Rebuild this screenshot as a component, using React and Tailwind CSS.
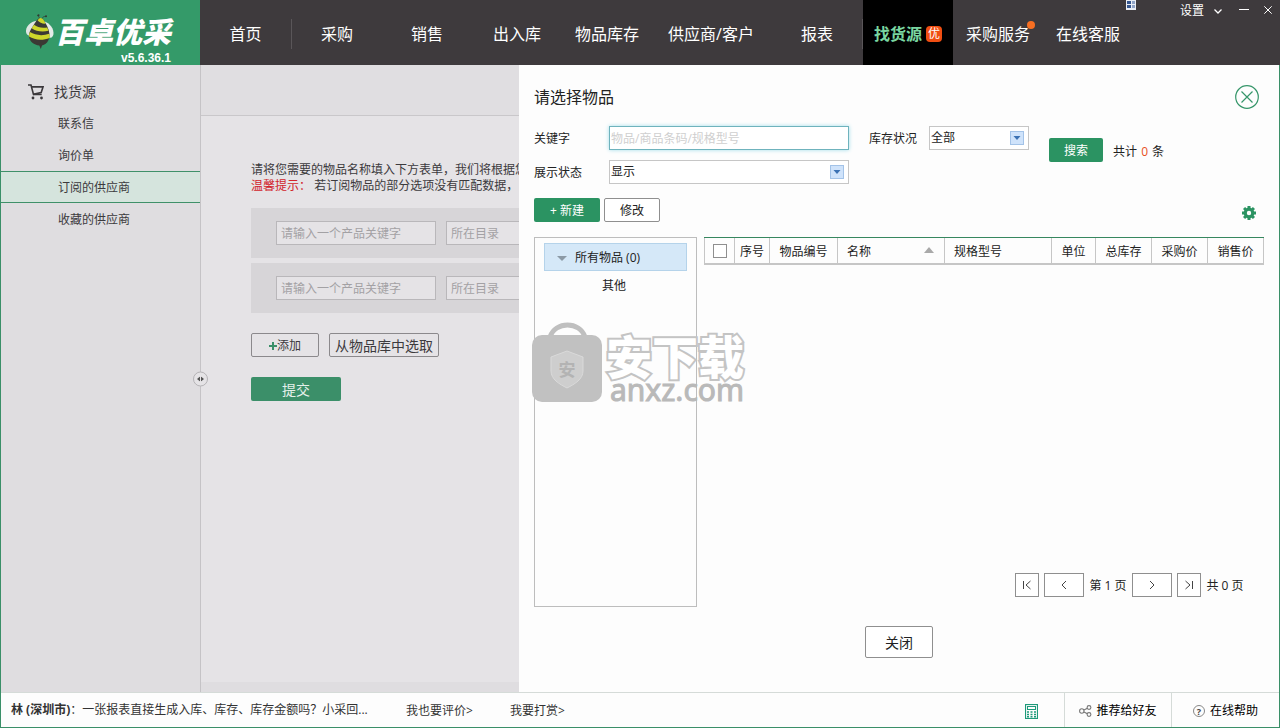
import React from "react";

const NAV = [
  { label: "采购" },
  { label: "销售" },
  { label: "出入库" },
  { label: "物品库存" },
  { label: "供应商/客户", wide: true },
  { label: "报表" },
];

const SIDE = [
  { label: "联系信" },
  { label: "询价单" },
  { label: "订阅的供应商", active: true },
  { label: "收藏的供应商" },
];

function BeeLogo() {
  return (
    <svg className="h-9 w-[30px] shrink-0" viewBox="0 0 30 36" aria-hidden="true">
      <path d="M14.500 4.500C14 2.500 13.500 1.800 12.200 1.500M17 4.500c1-1.800 2-2.200 3.500-2" stroke="#2f4a3a" strokeWidth="0.900" fill="none" />
      <circle cx="13.500" cy="1.300" r="1" fill="#2f3a33" />
      <circle cx="21" cy="2.300" r="1" fill="#2f3a33" />
      <path d="M14 6.500C8 6.500 1.500 10.500 1 16.500c-.3 3.500 2 5.500 4.500 5z" fill="#dfe6e2" />
      <path d="M18 7c5 1 10 5.500 10.500 11.500.3 4-2 6-4.500 5z" fill="#e6ebe8" />
      <path d="M15.500 4c2.500 0 5 4.500 7 9 2 4.500 2.800 9 1 13-1.500 3.300-3.800 4.800-6.500 5.400L15.800 35l-1.500-3.500C9 31 4.500 27.500 4 22.500c-.3-4.500 2.500-8 5-12C11 7.300 12.800 4 15.500 4z" fill="#3b3934" />
      <path d="M12.600 6.500C13.500 5 14.400 4 15.500 4c1.500 0 3 1.500 4.300 4l.8 1.600c-3 .3-6-.9-8-3.100z" fill="#ced62b" />
      <path d="M9 10.800l-2.300 3.500c4.300 3 10.500 4.300 16.800 2.500l-1.300-3.400C17.500 14.500 12.500 13.500 9 10.800z" fill="#ced62b" />
      <path d="M4.900 18.100c-.7 1.400-1 3-.9 4.500 5.500 3.500 13.500 4.300 20.600 1.400.1-1.400 0-2.800-.3-4.200C17.500 22 10.500 21.500 4.900 18.100z" fill="#ced62b" />
    </svg>
  );
}

function SelectBox({ id, value, className }) {
  return (
    <div className={"relative h-6 " + className}>
      <select
        id={id}
        defaultValue={value}
        className="block h-6 w-full appearance-none rounded-none border border-[#c6c6c6] bg-white pl-px text-xs text-[#222] outline-none"
      >
        <option>{value}</option>
      </select>
      <span className="pointer-events-none absolute top-[5px] right-[5px] flex size-3.5 items-center justify-center border border-[#a3c3e8] bg-[#cfe3fb]">
        <svg className="h-1 w-2" viewBox="0 0 8 4" aria-hidden="true">
          <path d="M0.500 0h7L4 4z" fill="#3c72b4" />
        </svg>
      </span>
    </div>
  );
}

function FormRow({ n }) {
  return (
    <div className="flex h-[50px] items-center gap-2.5 bg-[#d7d5d8] pl-[25px]">
      <input
        aria-label={"产品关键字 " + n}
        placeholder="请输入一个产品关键字"
        className="h-6 w-40 shrink-0 border border-[#b9b7ba] bg-[#e5e3e6] px-1 text-xs outline-none placeholder:text-[#a3a1a4]"
      />
      <input
        aria-label={"所在目录 " + n}
        placeholder="所在目录"
        className="h-6 w-40 shrink-0 border border-[#b9b7ba] bg-[#e5e3e6] px-1 text-xs outline-none placeholder:text-[#a3a1a4]"
      />
    </div>
  );
}

function Header() {
  return (
    <header className="relative flex h-[65px] shrink-0 bg-[#3e3a3d] text-white">
      <div className="flex w-[200px] shrink-0 flex-col bg-[#349a69]">
        <div className="flex items-center pt-3.5 pl-[25px]">
          <BeeLogo />
          <span className="text-[29px] leading-9 font-black italic">百卓优采</span>
        </div>
        <span className="pr-[29px] text-right font-['Liberation_Sans',sans-serif] text-xs leading-4 font-bold">
          v5.6.36.1
        </span>
      </div>
      <nav className="flex pt-0.5 text-base">
        <a href="#home" className="flex w-[91px] items-center justify-center">首页</a>
        <span className="h-[30px] w-px self-center bg-[#5a5659]" />
        {NAV.map((item) => (
          <a
            key={item.label}
            href="#nav"
            className={"flex items-center justify-center whitespace-nowrap " + (item.wide ? "w-[120px] pr-0.5" : "w-[90px]")}
          >
            {item.label}
          </a>
        ))}
        <span className="h-[30px] w-px self-center bg-[#5a5659]" />
        <a href="#source" className="-mt-0.5 flex w-[90px] items-center justify-center gap-1 bg-black pt-0.5 font-bold text-[#7ad6a0]">
          找货源
          <span className="flex size-4 items-center justify-center rounded-sm bg-[#f04e12] text-xs font-normal text-white">优</span>
        </a>
        <a href="#service" className="relative flex w-[90px] items-center justify-center">
          采购服务
          <span className="absolute top-[19px] right-2 size-2 rounded-full bg-[#f86f22]" />
        </a>
        <a href="#support" className="flex w-[90px] items-center justify-center">在线客服</a>
      </nav>
      <div className="absolute top-0 right-0 flex items-start text-xs">
        <svg className="mr-11 size-2.5" viewBox="0 0 10 10" aria-hidden="true">
          <rect width="10" height="10" fill="#e9eef5" />
          <path d="M1 1h4v3H1zM1 5h4v3H1z" fill="#34558f" />
          <path d="M6 1h3v3H6zM6 5h3v3H6z" fill="#8fa4c8" />
        </svg>
        <button type="button" className="flex h-[22px] items-center gap-2.5">
          设置
          <svg className="h-[5px] w-2" viewBox="0 0 8 5" fill="none" stroke="white" strokeWidth="1.3" aria-hidden="true">
            <path d="M0.500 0.500L4 4l3.500-3.500" />
          </svg>
        </button>
        <button type="button" aria-label="最小化" className="ml-[17px] flex h-5 items-center">
          <svg className="size-2.5" viewBox="0 0 10 10" stroke="white" aria-hidden="true">
            <path d="M0 4.500h10" />
          </svg>
        </button>
        <button type="button" aria-label="关闭窗口" className="mr-2 ml-[15px] flex h-5 items-center">
          <svg className="size-2" viewBox="0 0 8 8" stroke="white" aria-hidden="true">
            <path d="M0.300 0.300l7.400 7.400M7.700 0.300L0.300 7.700" />
          </svg>
        </button>
      </div>
    </header>
  );
}

function Sidebar() {
  return (
    <aside className="relative w-[200px] shrink-0 border-r border-[#c5c3c6] bg-[#dfdde0] pt-2.5 text-xs text-[#3c3a3d]">
      <div className="flex h-8 items-center gap-2.5 pt-0.5 pl-[27px] text-sm">
        <svg className="h-4 w-4" viewBox="0 0 16 16" fill="none" stroke="#3b383b" strokeWidth="1.600" aria-hidden="true">
          <path d="M0 1h3l2.500 9.500h8.200" />
          <path d="M3.500 2.900h11.500L13.200 8.600 5 10.400" />
          <circle cx="5" cy="14" r="1.400" fill="#3b383b" stroke="none" />
          <circle cx="13.500" cy="14" r="1.400" fill="#3b383b" stroke="none" />
        </svg>
        找货源
      </div>
      {SIDE.map((item) => (
        <a
          key={item.label}
          href="#side"
          className={
            "flex h-8 items-center pt-0.5 pl-[57px] " +
            (item.active ? "border-y border-[#3f9069] bg-[#d5e4dd]" : "")
          }
        >
          {item.label}
        </a>
      ))}
      <button
        type="button"
        aria-label="折叠侧栏"
        className="absolute top-1/2 -right-2 z-10 flex size-[15px] -translate-y-1/2 items-center justify-center rounded-full border border-[#b5b3b6] bg-[#e5e3e6]"
      >
        <svg className="h-[5px] w-[7px]" viewBox="0 0 7 5" fill="#555" aria-hidden="true">
          <path d="M3 0v5L0 2.500zM4 0v5l3-2.500z" />
        </svg>
      </button>
    </aside>
  );
}

function Content() {
  return (
    <section className="flex min-w-0 flex-1 flex-col overflow-hidden bg-[#e5e3e6] text-xs text-[#3c3a3d]">
      <div className="h-[51px] border-b border-[#c9c7ca] bg-[#e0dee1]" />
      <div className="flex-1 pt-[46px] pl-[50px]">
        <p className="leading-4 whitespace-nowrap">请将您需要的物品名称填入下方表单，我们将根据您</p>
        <p className="leading-4 whitespace-nowrap">
          <span className="text-[#d2242b]">温馨提示：</span> 若订阅物品的部分选项没有匹配数据，
        </p>
        <div className="mt-3.5 flex flex-col gap-[5px]">
          <FormRow n={1} />
          <FormRow n={2} />
        </div>
        <div className="mt-5 flex gap-2.5">
          <button type="button" className="flex h-6 w-[68px] items-center justify-center rounded-xs border border-[#8b898c] pt-px">
            <svg className="size-2" viewBox="0 0 8 8" stroke="#3a8f68" strokeWidth="2" aria-hidden="true">
              <path d="M4 0v8M0 4h8" />
            </svg>
            添加
          </button>
          <button type="button" className="h-6 w-[110px] rounded-xs border border-[#8b898c] pt-px text-sm leading-5 whitespace-nowrap">
            从物品库中选取
          </button>
        </div>
        <button type="button" className="mt-5 h-6 w-[90px] rounded-xs bg-[#3b8f69] pt-px text-sm leading-5 text-[#e5f0ea]">
          提交
        </button>
      </div>
      <div className="h-2.5 bg-[#dfdde0]" />
    </section>
  );
}

const TH = "border-r border-[#c6c6c6] p-0 text-center font-normal whitespace-nowrap";
const TH_TEXT = TH + " pt-0.5";

function ItemTable() {
  return (
    <div className="border-t border-[#36875f]">
      <table className="w-full table-fixed border-separate border-spacing-0 border-b-2 border-l border-[#c6c6c6]">
        <colgroup>
          <col className="w-[30px]" />
          <col className="w-[35px]" />
          <col className="w-[68px]" />
          <col />
          <col />
          <col className="w-11" />
          <col className="w-14" />
          <col className="w-14" />
          <col className="w-14" />
        </colgroup>
        <thead>
          <tr className="h-[25px]">
            <th className={TH}>
              <input
                type="checkbox"
                aria-label="全选"
                className="mx-auto block size-3.5 appearance-none border border-[#8f8f8f] bg-white"
              />
            </th>
            <th className={TH_TEXT}>序号</th>
            <th className={TH_TEXT}>物品编号</th>
            <th className={TH_TEXT}>
              <span className="flex items-center justify-between pr-2.5 pl-[9px]">
                名称
                <svg className="mb-1 h-1.5 w-2.5" viewBox="0 0 10 6" aria-hidden="true">
                  <path d="M5 0l5 6H0z" fill="#a9a9a9" />
                </svg>
              </span>
            </th>
            <th className={TH_TEXT}>
              <span className="block pl-[9px] text-left">规格型号</span>
            </th>
            <th className={TH_TEXT}>单位</th>
            <th className={TH_TEXT}>总库存</th>
            <th className={TH_TEXT}>采购价</th>
            <th className={TH_TEXT}>销售价</th>
          </tr>
        </thead>
      </table>
    </div>
  );
}

const PAGE_BTN = "flex h-6 items-center justify-center border border-[#8f8f8f] bg-white";

function PageIcon({ d }) {
  return (
    <svg className="size-2.5" viewBox="0 0 10 10" fill="none" stroke="#444" aria-hidden="true">
      <path d={d} />
    </svg>
  );
}

function Pagination() {
  return (
    <div className="mr-5 mb-2.5 flex items-center justify-end gap-[5px]">
      <button type="button" aria-label="首页" className={PAGE_BTN + " w-6"}>
        <PageIcon d="M1.500 1v8M8.500 1L4 5l4.500 4" />
      </button>
      <button type="button" aria-label="上一页" className={PAGE_BTN + " w-10"}>
        <PageIcon d="M7 1L3 5l4 4" />
      </button>
      <span className="w-[38px] pt-0.5 text-center whitespace-nowrap">第 1 页</span>
      <button type="button" aria-label="下一页" className={PAGE_BTN + " w-10"}>
        <PageIcon d="M3 1l4 4-4 4" />
      </button>
      <button type="button" aria-label="末页" className={PAGE_BTN + " w-6"}>
        <PageIcon d="M1.500 1L6 5 1.500 9M8.500 1v8" />
      </button>
      <span className="w-[38px] pt-0.5 text-center whitespace-nowrap">共 0 页</span>
    </div>
  );
}

function Watermark() {
  return (
    <div className="pointer-events-none absolute top-[257px] left-[13px] flex items-start" aria-hidden="true">
      <svg className="h-20 w-[70px] shrink-0" viewBox="0 0 70 80">
        <path d="M18 15C23-1 48-1 53 15" fill="none" stroke="#bfbfbf" strokeWidth="5" />
        <rect y="13" width="70" height="67" rx="10" fill="#c1c1c1" />
        <path d="M35 29l16 6v14c0 8-8 13-16 17-8-4-16-9-16-17V35z" fill="#cecece" stroke="#dadada" />
        <text x="35" y="54" textAnchor="middle" fontSize="17" fontWeight="700" fill="#b3b3b3">安</text>
      </svg>
      <div className="flex flex-col pt-3 pl-1">
        <span className="text-[46px] leading-[44px] font-black text-white [paint-order:stroke_fill] [-webkit-text-stroke:4px_#c4c4c4]">安下载</span>
        <span className="pl-1 font-['Noto_Sans',sans-serif] text-[30px] leading-6 text-[#b9b9b9] [-webkit-text-stroke:1px_#b9b9b9]">anxz.com</span>
      </div>
    </div>
  );
}

function Drawer() {
  return (
    <div role="dialog" aria-label="请选择物品" className="absolute inset-y-0 right-0 z-20 flex w-[760px] flex-col bg-[#fdfdfd] px-[15px] pt-5 pb-[34px] text-xs text-[#222]">
      <div className="flex h-6 items-center justify-between pr-[5px]">
        <h2 className="text-base">请选择物品</h2>
        <button type="button" aria-label="关闭对话框" className="size-6">
          <svg className="size-6" viewBox="0 0 24 24" fill="none" stroke="#36966a" strokeWidth="1.200" aria-hidden="true">
            <circle cx="12" cy="12" r="11.300" />
            <path d="M6.500 6.500l11 11M17.500 6.500l-11 11" />
          </svg>
        </button>
      </div>
      <div className="mt-[17px] flex">
        <div className="flex flex-col gap-2.5">
          <div className="flex items-center">
            <label htmlFor="kw" className="w-[75px] pt-0.5">关键字</label>
            <input
              id="kw"
              placeholder="物品/商品条码/规格型号"
              className="h-6 w-60 border border-[#6fb3bd] bg-white px-px text-xs shadow-[0_0_4px_#9fdcea] outline-none placeholder:text-[#cfcfcf]"
            />
          </div>
          <div className="flex items-center">
            <label htmlFor="show" className="w-[75px] pt-0.5">展示状态</label>
            <SelectBox id="show" value="显示" className="w-60" />
          </div>
        </div>
        <div className="ml-5 flex h-6 items-center">
          <label htmlFor="stock" className="w-[60px] pt-0.5">库存状况</label>
          <SelectBox id="stock" value="全部" className="w-[100px]" />
        </div>
        <button type="button" className="mt-3 ml-5 h-6 w-[54px] rounded-xs bg-[#2b9362] pt-0.5 text-white">搜索</button>
        <p className="mt-3 ml-2.5 h-6 pt-0.5 leading-6">
          共计 <span className="px-px text-[#e8501c]">0</span> 条
        </p>
      </div>
      <div className="mt-3.5 flex items-center gap-1">
        <button type="button" className="h-6 w-[66px] rounded-xs bg-[#2b9362] pt-0.5 text-white">+ 新建</button>
        <button type="button" className="h-6 w-14 rounded-xs border border-[#8f8f8f] bg-white pt-0.5">修改</button>
        <button type="button" aria-label="列设置" className="mt-1.5 mr-2 ml-auto size-3.5">
          <svg className="size-3.5" viewBox="0 0 14 14" aria-hidden="true">
            <circle cx="7" cy="7" r="3.800" fill="none" stroke="#2b9362" strokeWidth="3.200" />
            <path
              d="M7 0v2.500M7 11.500V14M0 7h2.500M11.500 7H14M2.050 2.050L3.800 3.800M10.200 10.200l1.750 1.750M2.050 11.950L3.800 10.200M10.200 3.800l1.750-1.750"
              stroke="#2b9362"
              strokeWidth="3"
            />
          </svg>
        </button>
      </div>
      <div className="mt-[15px] flex flex-1 gap-[7px]">
        <div className="w-[163px] shrink-0 border border-[#bdbdbd] px-[9px] pt-[5px]">
          <button type="button" className="flex h-7 w-full items-center gap-2 border border-[#b5d3ea] bg-[#d5e8f8] pt-0.5 pl-3">
            <svg className="h-[5px] w-2.5" viewBox="0 0 10 5" aria-hidden="true">
              <path d="M0 0h10L5 5z" fill="#8c9aa6" />
            </svg>
            所有物品 (0)
          </button>
          <button type="button" className="flex h-7 w-full items-center pt-0.5 pl-[58px]">其他</button>
        </div>
        <div className="flex min-w-0 flex-1 flex-col justify-between">
          <ItemTable />
          <Pagination />
        </div>
      </div>
      <button type="button" className="mt-[19px] h-8 w-[68px] self-center rounded-xs border border-[#8f8f8f] bg-white pt-0.5 text-sm">
        关闭
      </button>
      <Watermark />
    </div>
  );
}

function Footer() {
  return (
    <footer className="flex h-[35px] shrink-0 items-stretch border-t border-[#d5dbd8] bg-[#fdfdfd] text-xs text-[#333]">
      <p className="flex w-[395px] items-center pl-2.5 whitespace-nowrap">
        <span className="font-bold">林 (深圳市)</span>：一张报表直接生成入库、库存、库存金额吗？小采回...
      </p>
      <a href="#rate" className="flex w-[104px] items-center pt-0.5 pl-2.5 text-[#333]">我也要评价&gt;</a>
      <a href="#tip" className="flex items-center pt-0.5 pl-2.5 text-[#333]">我要打赏&gt;</a>
      <button type="button" aria-label="计算器" className="mr-[26px] ml-auto pt-0.5">
        <svg className="h-[15px] w-[13px]" viewBox="0 0 13 15" fill="none" stroke="#1e9a7a" aria-hidden="true">
          <rect x="0.500" y="0.500" width="12" height="14" strokeWidth="1.200" />
          <rect x="2.500" y="2.500" width="8" height="3" />
          <path d="M2 8h2M5.500 8h2M9 8h2M2 10.500h2M5.500 10.500h2M9 10.500h2M2 12.700h2M5.500 12.700h2M9 12.700h2" strokeWidth="1.500" />
        </svg>
      </button>
      <a href="#share" className="flex w-[107px] items-center justify-center gap-1 border-l border-[#d5dbd8] pt-0.5 text-black">
        <svg className="h-3 w-[13px]" viewBox="0 0 13 12" fill="none" stroke="#777" strokeWidth="1.100" aria-hidden="true">
          <circle cx="2.800" cy="6" r="2.200" />
          <circle cx="10" cy="2.500" r="1.900" />
          <circle cx="10" cy="9.500" r="1.900" />
          <path d="M5 5l3.300-1.700M5 7l3.300 1.700" />
        </svg>
        推荐给好友
      </a>
      <a href="#help" className="flex w-[108px] items-center justify-center gap-[5px] border-l border-[#d5dbd8] pt-0.5 text-black">
        <span className="flex size-3 items-center justify-center rounded-full border border-[#888] text-[9px] leading-none font-bold text-[#444]">?</span>
        在线帮助
      </a>
    </footer>
  );
}

export default function App() {
  return (
    <div className="flex min-h-screen flex-col font-['Open_Sans','Noto_Sans_CJK_SC',sans-serif]">
      <Header />
      <div className="flex flex-1 flex-col border-x border-b border-[#3a8f68]">
        <main className="relative flex min-h-[560px] flex-1">
          <Sidebar />
          <Content />
          <Drawer />
        </main>
        <Footer />
      </div>
    </div>
  );
}
